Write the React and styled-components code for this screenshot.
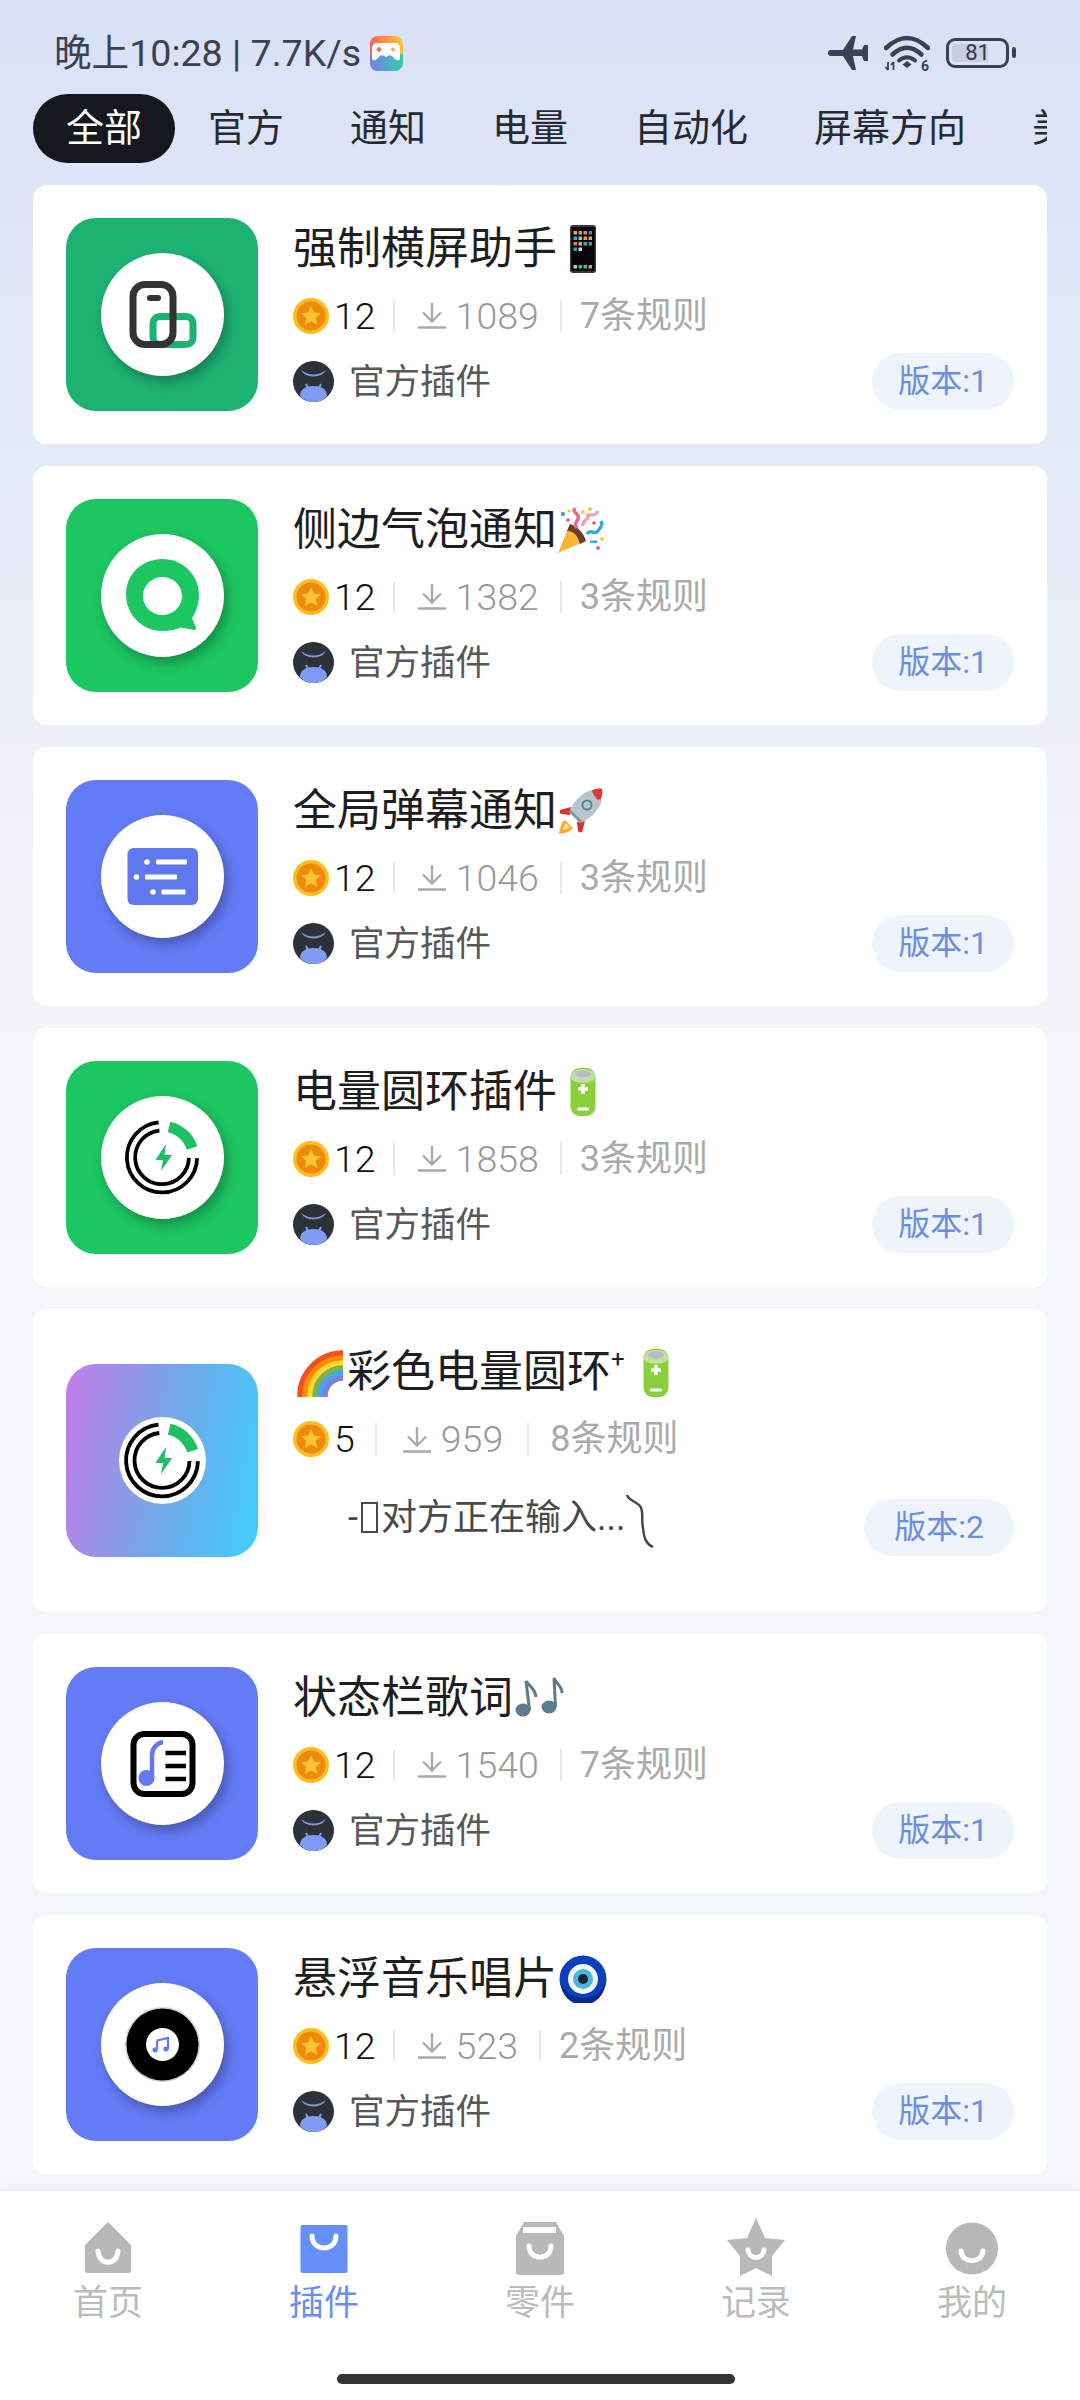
import React from 'react';
import styled, { createGlobalStyle } from 'styled-components';

const GlobalStyle = createGlobalStyle`
  html, body {
    margin: 0;
    padding: 0;
    background: #f4f7fa;
  }
  * {
    box-sizing: border-box;
  }
`;

const Page = styled.div`
  width: 1080px;
  height: 2400px;
  overflow: hidden;
  display: flex;
  flex-direction: column;
  font-family: Roboto, "Noto Sans CJK SC", sans-serif;
  background: linear-gradient(180deg, #d9e1f6 0, #e5eaf8 460px, #f1f3f9 900px, #f4f7fa 1300px);
`;

const StatusBar = styled.div`
  height: 94px;
  padding: 12px 66px 0 54px;
  display: flex;
  align-items: center;
  justify-content: space-between;
  color: #3c4150;
`;

const StatusLeft = styled.div`
  display: flex;
  align-items: center;
  gap: 9px;
  font-size: 37.6px;
  line-height: 44px;
  white-space: nowrap;
`;

const StatusRight = styled.div`
  display: flex;
  align-items: center;
  gap: 16px;
`;

const Battery = styled.div`
  position: relative;
  width: 63px;
  height: 30px;
  margin-right: 5px;
  padding: 3px;
  border: 3px solid #3c4150;
  border-radius: 9px;
  font-size: 22px;
  line-height: 18px;
  text-align: center;
  color: #343844;
  background: linear-gradient(90deg, #c7cee2 ${(p) => p.$level}%, transparent ${(p) => p.$level}%) content-box;

  &::after {
    content: '';
    position: absolute;
    right: -10px;
    top: 6px;
    width: 4px;
    height: 11px;
    border-radius: 2px;
    background: #3c4150;
  }
`;

const TabRow = styled.div`
  height: 69px;
  margin: 0 33px;
  display: flex;
  flex-shrink: 0;
  overflow: hidden;
`;

const Tab = styled.div`
  flex-shrink: 0;
  padding: 0 33px;
  border-radius: 35px;
  font-size: 38px;
  line-height: 69px;
  white-space: nowrap;
  color: ${(p) => (p.$active ? '#ffffff' : '#262a33')};
  background: ${(p) => (p.$active ? '#15181f' : 'transparent')};
`;

const List = styled.div`
  flex: 1;
  margin: 22px 33px 0;
  display: flex;
  flex-direction: column;
  gap: 22px;
`;

const Card = styled.div`
  padding: 33px;
  display: flex;
  align-items: center;
  border-radius: 14px;
  background: #ffffff;
`;

const Tile = styled.div`
  width: 192px;
  height: 193px;
  flex-shrink: 0;
  display: flex;
  align-items: center;
  justify-content: center;
  border-radius: 30px;
  background: ${(p) => p.$bg};
`;

const Disc = styled.div`
  width: ${(p) => p.$size}px;
  height: ${(p) => p.$size}px;
  border-radius: 50%;
  background: #ffffff;
  box-shadow: ${(p) => (p.$flat ? 'none' : '4px 6px 12px rgba(0, 0, 0, 0.28)')};

  svg {
    display: block;
    width: 100%;
    height: 100%;
  }
`;

const Info = styled.div`
  flex: 1;
  min-width: 0;
  margin-left: 35px;
  display: flex;
  flex-direction: column;
`;

const TitleRow = styled.div`
  height: 58px;
  padding-top: 3px;
  display: flex;
  align-items: center;
  font-size: 44px;
  line-height: 55px;
  color: #1e1e1e;
  white-space: nowrap;

  svg {
    flex-shrink: 0;
  }
`;

const Sup = styled.span`
  align-self: flex-start;
  margin: -4px 5px 0 0;
  font-size: 24px;
  line-height: 36px;
`;

const MetaRow = styled.div`
  height: 40px;
  margin-top: 19px;
  display: flex;
  align-items: center;
  font-size: 36px;
  line-height: 40px;
  color: #aaaaaa;
  white-space: nowrap;
`;

const Count = styled.span`
  margin-left: 5px;
  margin-right: -1px;
  font-size: 37.5px;
  font-weight: 300;
  color: #111111;
`;

const Divider = styled.span`
  width: 2px;
  height: 32px;
  margin: 0 ${(p) => (p.$loose ? 21 : 18)}px;
  background: #e8e8e8;
`;

const Downloads = styled.span`
  margin: 0 3px 0 5px;
  display: flex;
  align-items: center;
  gap: 10px;
  font-size: 37.5px;
  font-weight: 300;
  color: #999999;
`;

const BottomRow = styled.div`
  height: ${(p) => (p.$tall ? 103 : 58)}px;
  margin-top: 17px;
  display: flex;
  align-items: center;
  justify-content: space-between;
`;

const Owner = styled.div`
  display: flex;
  align-items: center;
  gap: 15px;
  font-size: 35.5px;
  color: #585858;
  white-space: nowrap;
`;

const OwnerName = styled.span`
  margin-bottom: 6px;
`;

const Typing = styled.div`
  margin: 0 0 20px 55px;
  display: flex;
  align-items: center;
  font-size: 36px;
  line-height: 50px;
  color: #4a4a4a;
  white-space: nowrap;
`;

const Tofu = styled.span`
  width: 17px;
  height: 31px;
  margin: 0 3px 0 3px;
  border: 2px solid #4a4a4a;
`;

const Version = styled.div`
  height: 57px;
  padding: 0 ${(p) => (p.$wide ? 30 : 26)}px;
  border-radius: 29px;
  font-size: 32px;
  line-height: 57px;
  color: #6b8fdf;
  background: #eef3fc;
  white-space: nowrap;
`;

const Nav = styled.div`
  height: 209px;
  flex-shrink: 0;
  padding-top: 27px;
  display: flex;
  flex-direction: column;
  align-items: center;
  background: #ffffff;
  box-shadow: 0 -3px 8px rgba(120, 140, 170, 0.08);
`;

const NavItems = styled.div`
  width: 100%;
  display: grid;
  grid-template-columns: repeat(5, 1fr);
`;

const NavItem = styled.div`
  display: flex;
  flex-direction: column;
  align-items: center;
  font-size: 35px;
  line-height: 40px;
  color: ${(p) => (p.$active ? '#6a8fee' : '#bbbbbb')};

  svg {
    display: block;
    margin-bottom: 8px;
  }
`;

const HomeBar = styled.div`
  width: 398px;
  height: 10px;
  margin: 50px 8px 0 0;
  border-radius: 5px;
  background: #333333;
`;

const GameIcon = () => (
  <svg width="33" height="35" viewBox="0 0 33 35">
    <defs>
      <linearGradient id="gameTop" x1="0" y1="0" x2="1" y2="0">
        <stop offset="0" stopColor="#f8604f" />
        <stop offset="1" stopColor="#fcc63c" />
      </linearGradient>
      <linearGradient id="gameLow" x1="0" y1="0" x2="1" y2="0">
        <stop offset="0" stopColor="#7a7cf0" />
        <stop offset="1" stopColor="#2fcfa8" />
      </linearGradient>
    </defs>
    <rect width="33" height="35" rx="8" fill="url(#gameTop)" />
    <path d="M0 18h33v9a8 8 0 0 1-8 8H8a8 8 0 0 1-8-8z" fill="url(#gameLow)" />
    <path d="M7 7h19c3 0 4 3 4 8v7c0 3-3 3-5 1l-3-3c-1-1-2-1-3-.5l-3 1.500-3-1.500c-1-.5-2-.5-3 .5l-3 3c-2 2-5 2-5-1v-7c0-5 1-8 4-8z" fill="#fff" />
    <path d="M9 11v5M6.500 13.500h5" stroke="#f2604f" strokeWidth="1.800" />
    <circle cx="23" cy="13.500" r="2" fill="#f7b44a" />
  </svg>
);

const PlaneIcon = () => (
  <svg width="40" height="34" viewBox="0 0 40 34" fill="#3c4150">
    <path d="M3 14h12L24 0h4l-3 13.500h9L36 9h4v16h-4l-2-5h-9l3 14h-4l-9-14H3a3 3 0 0 1 0-6z" />
  </svg>
);

const WifiIcon = () => (
  <svg width="46" height="40" viewBox="0 0 46 40" fill="none" stroke="#3c4150" strokeWidth="4.500" strokeLinecap="round" style={{ marginTop: 4 }}>
    <path d="M2 13Q23-7 44 13" />
    <path d="M8.500 19.500Q23 6 37.500 19.500" />
    <path d="M15 25.500Q23 19 31 25.500" strokeWidth="4" />
    <path d="M23 26l4.500 3.500-4.500 3.500-4.500-3.500z" fill="#3c4150" stroke="none" />
    <path d="M4 27v8M1.500 32l2.500 3M9.500 27v8M7 30l2.500-3" strokeWidth="1.800" strokeLinecap="butt" />
    <text x="37" y="35.500" fontSize="14" fontWeight="700" fontFamily="Roboto, sans-serif" fill="#3c4150" stroke="none">6</text>
  </svg>
);

const Coin = () => (
  <svg width="36" height="36" viewBox="0 0 36 36">
    <circle cx="18" cy="18" r="18" fill="#fcbd1d" />
    <circle cx="18" cy="18" r="14.500" fill="#ee8a0e" />
    <path d="M18 8l3 6.500 7 .8-5.200 4.700 1.500 7L18 23.500 11.700 27l1.500-7L8 15.300l7-.8z" fill="#fdc22f" />
  </svg>
);

const DownloadIcon = () => (
  <svg width="28" height="27" viewBox="0 0 28 27" fill="none" stroke="#aaaaaa" strokeWidth="2.400">
    <path d="M14 1v18M5 10.500l9 9 9-9M0 25.500h28" />
  </svg>
);

const Avatar = () => (
  <svg width="41" height="41" viewBox="0 0 41 41">
    <circle cx="20.500" cy="20.500" r="20.500" fill="#2f3139" />
    <path d="M8 9q12.500 9 25 0q-3 6-12.500 6.500Q11 15 8 9z" fill="#7d97d8" />
    <path d="M13 23l2.500 5M28 23l-2.500 5" stroke="#7f9cf5" strokeWidth="2" />
    <path d="M7 35c0-7 6-10 13.500-10S34 28 34 35c-3.500 4-8.500 6-13.500 6S10.500 39 7 35z" fill="#7f9cf5" />
  </svg>
);

// plugin artwork, drawn in the 123 box of the white disc
const PhoneArt = () => (
  <svg viewBox="0 0 123 123" fill="none">
    <rect x="52" y="63.500" width="40" height="28" rx="7" stroke="#1db272" strokeWidth="7" />
    <rect x="32" y="31.500" width="40" height="60" rx="12" stroke="#333333" strokeWidth="7" />
    <rect x="46" y="42" width="14" height="6" rx="3" fill="#333333" />
  </svg>
);

const BubbleArt = () => (
  <svg viewBox="0 0 123 123">
    <path
      fillRule="evenodd"
      fill="#1cc660"
      d="M61.500 25c20 0 36.500 16 36.500 36 0 9-3 17-7 23l4 9.500c.5 1.500-.5 2.500-2 2.500l-13-2.500c-5 2-12 3.500-18.500 3.500-20 0-36.500-16-36.500-36.500S41.500 25 61.500 25zm0 18c-10.500 0-19.500 8.500-19.500 19s9 19 19.500 19S81 72.500 81 62s-9-19-19.500-19z"
    />
  </svg>
);

const ListArt = () => (
  <svg viewBox="0 0 123 123" fill="#5f78ee">
    <rect x="26.500" y="33" width="70.500" height="57" rx="6" />
    <g fill="#ffffff">
      <circle cx="46" cy="47" r="2.800" />
      <rect x="55" y="44.500" width="31" height="5" rx="1" />
      <circle cx="35.500" cy="62" r="2.800" />
      <rect x="44" y="59.500" width="32" height="5" rx="1" />
      <circle cx="52" cy="77" r="2.800" />
      <rect x="60.500" y="74.500" width="24" height="5" rx="1" />
    </g>
  </svg>
);

const RingArt = ({ box = '0 0 123 123' }) => (
  <svg viewBox={box} fill="none">
    <path d="M58 30.500A31 31 0 1 0 92 62" stroke="#000000" strokeWidth="12" />
    <path d="M58 30.500A31 31 0 1 0 92 62" stroke="#ffffff" strokeWidth="4.500" />
    <path d="M68 31A31 31 0 0 1 91 52" stroke="#1fc063" strokeWidth="11" />
    <path d="M65 48L54.500 64H62L60 75L71 59H63.500z" fill="#1fc063" />
  </svg>
);

const LyricArt = () => (
  <svg viewBox="0 0 123 123" fill="none">
    <rect x="32.500" y="32" width="59" height="60" rx="11" stroke="#000000" strokeWidth="6" />
    <circle cx="45.500" cy="76" r="8" fill="#6279f2" />
    <path d="M51 76V53c0-7 5-12 11-13" stroke="#6279f2" strokeWidth="4.500" />
    <path d="M64.500 51H85M64.500 64H85M64.500 77H85" stroke="#000000" strokeWidth="4.500" />
  </svg>
);

const RecordArt = () => (
  <svg viewBox="0 0 123 123">
    <circle cx="61.500" cy="61.500" r="37.500" fill="#888888" opacity="0.4" />
    <circle cx="61.500" cy="61.500" r="36" fill="#000000" />
    <circle cx="61.500" cy="61.500" r="16.500" fill="#ffffff" />
    <path d="M56 57.500l11-2.500v11" fill="none" stroke="#6279f2" strokeWidth="2.200" />
    <ellipse cx="54" cy="67" rx="2.600" ry="2.400" fill="#6279f2" />
    <ellipse cx="65" cy="66" rx="2.600" ry="2.400" fill="#6279f2" />
    <path d="M56 57.500V67" stroke="#6279f2" strokeWidth="2.200" />
  </svg>
);

// title emoji, no colour emoji font is installed
const PhoneEmoji = () => {
  const colors = ['#e9a66c', '#e58d5a', '#e97d6e', '#3d8fc0', '#3fb5a5', '#7fd0e0', '#e5a23d', '#e8a26a', '#e8766e', '#e79ab0', '#4ab0a0', '#3a9ac0', '#3f9bc8', '#c8d4f0'];
  return (
    <svg width="48" height="48" viewBox="0 0 48 48" style={{ marginLeft: 2 }}>
      <rect x="11" y="0" width="26" height="48" rx="3" fill="#3a3a3a" />
      <rect x="12.500" y="2" width="23" height="44" fill="#050505" />
      {colors.map((c, i) => (
        <rect key={i} x={14.500 + (i % 4) * 5} y={6 + Math.floor(i / 4) * 5.500} width="3.500" height="3.500" fill={c} />
      ))}
      {['#9ad4e6', '#3fb5a5', '#3fb5a5', '#e58fa5'].map((c, i) => (
        <rect key={i} x={14.500 + i * 5} y="40" width="3.500" height="3.500" fill={c} />
      ))}
    </svg>
  );
};

const PopperEmoji = () => (
  <svg width="48" height="48" viewBox="0 0 48 48" fill="none">
    <path d="M1 47L13 18l16 17z" fill="#f7b733" />
    <path d="M13 18c7 2 14 9 16 17l-6 3C21 30 17 25 10 25z" fill="#6b3f2a" />
    <path d="M20 22c-5-6 3-7 1-12s-6-3-3-8" stroke="#e86a8a" strokeWidth="3.500" />
    <path d="M30 28c4-6 8 2 11-3s5-5 3-10" stroke="#35a9d8" strokeWidth="3.500" />
    <path d="M26 20c-2-6 7-6 5-11 4 0 8 1 10-4" stroke="#f29ab4" strokeWidth="3" />
    <path d="M33 36c3-1 5 1 7-1" stroke="#35a9d8" strokeWidth="2.500" />
    <circle cx="6" cy="8" r="2.200" fill="#35a9d8" />
    <circle cx="11" cy="14" r="1.800" fill="#e8506a" />
    <circle cx="33" cy="3" r="2" fill="#f2c21e" />
    <circle cx="41" cy="42" r="2" fill="#e86a8a" />
    <circle cx="45" cy="33" r="1.800" fill="#f2c21e" />
    <circle cx="26" cy="6" r="1.800" fill="#f2c21e" />
    <circle cx="12" cy="5" r="1.600" fill="#f2c21e" />
    <circle cx="37" cy="17" r="1.800" fill="#e8506a" />
  </svg>
);

const RocketEmoji = () => (
  <svg width="48" height="48" viewBox="0 0 48 48">
    <path d="M8 33c-4 3-5 8-6 14 6-1 11-2 14-6z" fill="#f7a82a" />
    <path d="M9 36c-2 2-3 5-3 7 3 0 5-1 7-3z" fill="#fde08a" />
    <path d="M14 20l-11 3c-1 2 0 3 1 4l9 1zM28 34l-3 11c-2 1-3 0-4-1l-1-9z" fill="#d8352a" />
    <path d="M35 3c-10 3-18 10-23 22l11 11c12-5 19-13 22-23z" fill="#b9c4cc" />
    <path d="M12 25l11 11 3-1-13-13z" fill="#8595a0" />
    <path d="M35 3c4-1 8-2 10-1 1 2 0 6-1 10-1 0-2 0-3 1-3-3-5-5-6-10z" fill="#dc3a2c" />
    <circle cx="30" cy="18" r="5.500" fill="#64808e" />
    <circle cx="30" cy="18" r="3.500" fill="#9fd0e4" />
  </svg>
);

const BatteryEmoji = () => (
  <svg width="48" height="48" viewBox="0 0 48 48" style={{ marginLeft: 2 }}>
    <rect x="11.500" y="0" width="25" height="48" rx="9" fill="#8ccf3e" />
    <path d="M11.500 9a12.500 8 0 0 1 25 0c0 3-6 6-12.500 6s-12.500-3-12.500-6z" fill="#c3dfa0" />
    <ellipse cx="24" cy="6" rx="8" ry="3.500" fill="#b8bcc8" />
    <path d="M24 16v10M19 21h10" stroke="#ffffff" strokeWidth="3.400" />
    <path d="M19.500 41h9" stroke="#ffffff" strokeWidth="3" strokeLinecap="round" />
  </svg>
);

const RainbowEmoji = () => (
  <svg width="48" height="48" viewBox="0 0 48 48" fill="none" style={{ margin: '0 3px' }}>
    {['#f4511e', '#fb8c00', '#fdd835', '#7cb342', '#42a5f5', '#7e7fd8'].map((c, i) => {
      const r = 43 - i * 5;
      return <path key={c} d={`M${47 - r} 48V47A${r} ${r} 0 0 1 47 ${47 - r}`} stroke={c} strokeWidth="5.500" />;
    })}
  </svg>
);

const NotesEmoji = () => (
  <svg width="54" height="48" viewBox="0 0 54 48" fill="none">
    <g fill="#5e7b8c">
      <ellipse cx="10" cy="36" rx="7.500" ry="6.500" />
      <ellipse cx="36" cy="33" rx="7.500" ry="6.500" />
    </g>
    <path d="M16.500 36L13 7c3 5 9 7 10 16M42.500 33L41 4c2 6 8 7 8 15" stroke="#5e7b8c" strokeWidth="3" />
  </svg>
);

const NazarEmoji = () => (
  <svg width="48" height="48" viewBox="0 0 48 48" style={{ marginLeft: 2 }}>
    <circle cx="24" cy="24" r="23.500" fill="#0a3fbd" />
    <path d="M2 28a22 22 0 0 0 44 0c-4 10-12 15-22 15S6 38 2 28z" fill="#062a90" />
    <circle cx="24" cy="24" r="15" fill="#f3f7fb" />
    <circle cx="24" cy="24" r="10" fill="#47b7e0" />
    <circle cx="24" cy="24" r="5" fill="#14233a" />
  </svg>
);

const Squiggle = () => (
  <svg width="30" height="56" viewBox="0 0 30 56" fill="none" style={{ marginTop: 6 }}>
    <path d="M2 2c1 5 8 6 13 11 4 5 1 12 3 22 1 10 3 16 10 19" stroke="#444444" strokeWidth="2.400" />
  </svg>
);

// nav icons share one 60x58 box
const Smile = ({ d }) => <path d={d} fill="none" stroke="#ffffff" strokeWidth="5" strokeLinecap="round" />;

const NavHome = ({ fill }) => (
  <svg width="60" height="58" viewBox="0 0 60 58">
    <path d="M30 4l23 23v25a3 3 0 0 1-3 3H10a3 3 0 0 1-3-3V27z" fill={fill} />
    <Smile d="M20 33c1 15 19 15 20 0" />
  </svg>
);

const NavBag = ({ fill }) => (
  <svg width="60" height="58" viewBox="0 0 60 58">
    <rect x="6.500" y="7" width="47" height="48" rx="2" fill={fill} />
    <Smile d="M18 18c0 16 24 16 24 0" />
  </svg>
);

const NavBox = ({ fill }) => (
  <svg width="60" height="58" viewBox="0 0 60 58">
    <path d="M14 4h32l8 14v36a3 3 0 0 1-3 3H9a3 3 0 0 1-3-3V18z" fill={fill} />
    <rect x="13" y="9" width="33" height="6" fill="#ffffff" />
    <Smile d="M19 28c0 15 22 15 22 0" />
  </svg>
);

const NavStar = ({ fill }) => (
  <svg width="60" height="58" viewBox="0 0 60 58">
    <path d="M30 0l9 20 20 2-13 16v20l-16-8-16 8V38L1 22l20-2z" fill={fill} />
    <Smile d="M22 32c1 10 15 10 16 0" />
  </svg>
);

const NavFace = ({ fill }) => (
  <svg width="60" height="58" viewBox="0 0 60 58">
    <circle cx="30" cy="30.500" r="26" fill={fill} />
    <Smile d="M19 33c1 13 21 13 22 0" />
  </svg>
);

const tabs = ['全部', '官方', '通知', '电量', '自动化', '屏幕方向', '美化'];

const navItems = [
  { label: '首页', Icon: NavHome },
  { label: '插件', Icon: NavBag, active: true },
  { label: '零件', Icon: NavBox },
  { label: '记录', Icon: NavStar },
  { label: '我的', Icon: NavFace },
];

const GREEN = '#1cc660';
const BLUE = '#647bf6';

const plugins = [
  { title: '强制横屏助手', after: <PhoneEmoji />, bg: '#1db272', art: <PhoneArt />, coins: 12, downloads: 1089, rules: 7, version: 1 },
  { title: '侧边气泡通知', after: <PopperEmoji />, bg: GREEN, art: <BubbleArt />, coins: 12, downloads: 1382, rules: 3, version: 1 },
  { title: '全局弹幕通知', after: <RocketEmoji />, bg: BLUE, art: <ListArt />, coins: 12, downloads: 1046, rules: 3, version: 1 },
  { title: '电量圆环插件', after: <BatteryEmoji />, bg: GREEN, art: <RingArt />, coins: 12, downloads: 1858, rules: 3, version: 1 },
  {
    title: '彩色电量圆环',
    before: <RainbowEmoji />,
    after: (
      <>
        <Sup>+</Sup>
        <BatteryEmoji />
      </>
    ),
    bg: 'linear-gradient(100deg, #c37de6 0%, #6fa9ea 55%, #40d0f8 100%)',
    art: <RingArt box="19 19 85 85" />,
    discSize: 87,
    flat: true,
    coins: 5,
    downloads: 959,
    rules: 8,
    version: 2,
    typing: true,
  },
  { title: '状态栏歌词', after: <NotesEmoji />, bg: BLUE, art: <LyricArt />, coins: 12, downloads: 1540, rules: 7, version: 1 },
  { title: '悬浮音乐唱片', after: <NazarEmoji />, bg: BLUE, art: <RecordArt />, coins: 12, downloads: 523, rules: 2, version: 1 },
];

const PluginCard = ({ plugin }) => (
  <Card>
    <Tile $bg={plugin.bg}>
      <Disc $size={plugin.discSize || 123} $flat={plugin.flat}>
        {plugin.art}
      </Disc>
    </Tile>
    <Info>
      <TitleRow>
        {plugin.before}
        {plugin.title}
        {plugin.after}
      </TitleRow>
      <MetaRow>
        <Coin />
        <Count>{plugin.coins}</Count>
        <Divider $loose={plugin.coins < 10} />
        <Downloads>
          <DownloadIcon />
          {plugin.downloads}
        </Downloads>
        <Divider $loose={plugin.coins < 10} />
        {plugin.rules}条规则
      </MetaRow>
      <BottomRow $tall={plugin.typing}>
        {plugin.typing ? (
          <Typing>
            -<Tofu />对方正在输入...
            <Squiggle />
          </Typing>
        ) : (
          <Owner>
            <Avatar />
            <OwnerName>官方插件</OwnerName>
          </Owner>
        )}
        <Version $wide={plugin.version !== 1}>版本:{plugin.version}</Version>
      </BottomRow>
    </Info>
  </Card>
);

const App = () => {
  return (
    <Page>
      <GlobalStyle />
      <StatusBar>
        <StatusLeft>
          晚上10:28 | 7.7K/s
          <GameIcon />
        </StatusLeft>
        <StatusRight>
          <PlaneIcon />
          <WifiIcon />
          <Battery $level={70}>81</Battery>
        </StatusRight>
      </StatusBar>
      <TabRow>
        {tabs.map((tab, i) => (
          <Tab key={tab} $active={i === 0}>
            {tab}
          </Tab>
        ))}
      </TabRow>
      <List>
        {plugins.map((plugin) => (
          <PluginCard key={plugin.title} plugin={plugin} />
        ))}
      </List>
      <Nav>
        <NavItems>
          {navItems.map(({ label, Icon, active }) => (
            <NavItem key={label} $active={active}>
              <Icon fill={active ? '#6690f9' : '#b8b8b8'} />
              {label}
            </NavItem>
          ))}
        </NavItems>
        <HomeBar />
      </Nav>
    </Page>
  );
};

export default App;
